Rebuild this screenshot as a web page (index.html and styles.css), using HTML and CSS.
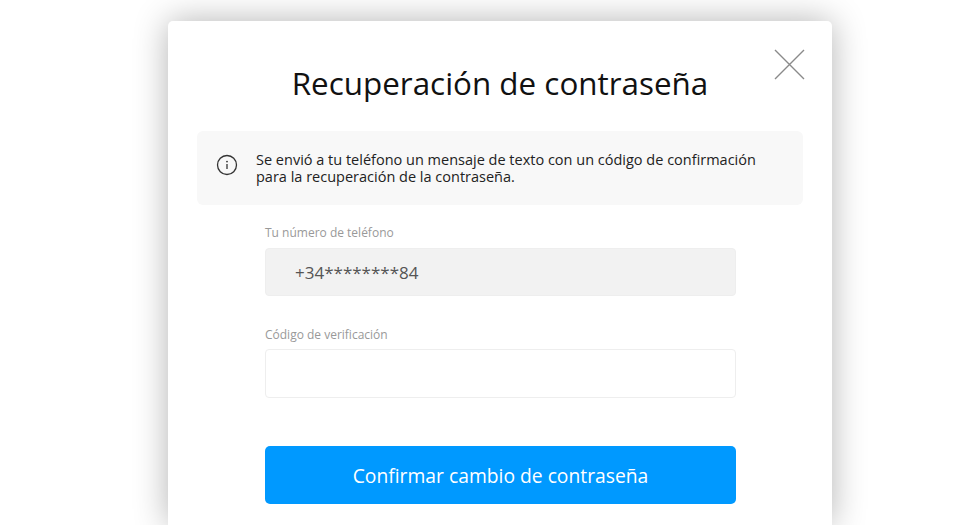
FILE: index.html
```html
<!DOCTYPE html>
<html lang="es">
<head>
    <meta charset="UTF-8">
    <meta name="viewport" content="width=device-width, initial-scale=1.0">
    <title>Recuperación de contraseña</title>

    <link rel="stylesheet" href="styles.css">
</head>
<body>
    <div class="backdrop">
        <div class="card">
            <button class="close" type="button" aria-label="Cerrar">
                <svg width="32" height="32" viewBox="0 0 32 32">
                    <path d="M2 2 L31 31 M31 2 L2 31" stroke="#8a8a8a" stroke-width="1.4" fill="none"/>
                </svg>
            </button>

            <h2>Recuperación de contraseña</h2>

            <div class="notice">
                <svg class="notice-icon" width="22" height="22" viewBox="0 0 22 22">
                    <circle cx="11" cy="11" r="9.5" stroke="#333" stroke-width="1.3" fill="none"/>
                    <circle cx="11" cy="7.6" r="0.9" fill="#333"/>
                    <path d="M11 10 V15" stroke="#333" stroke-width="1.3" fill="none"/>
                </svg>
                <p>Se envió a tu teléfono un mensaje de texto con un código de confirmación<br>para la recuperación de la contraseña.</p>
            </div>

            <form class="form">
                <label for="phone">Tu número de teléfono</label>
                <input class="input input-disabled" type="text" id="phone" value="+34********84" disabled>

                <label class="label-code" for="code">Código de verificación</label>
                <input class="input input-code" type="text" id="code">

                <input class="submit" type="submit" value="Confirmar cambio de contraseña">
            </form>
        </div>
    </div>
</body>
</html>
```

FILE: styles.css
```css
/* General styling */
body, html {
    margin: 0;
    padding: 0;
    width: 100%;
    height: 100%;
    overflow: hidden;
    background-color: #fff;
    font-family: "Open Sans", sans-serif;
}

.backdrop {
    display: flex;
    box-sizing: border-box;
    height: 100%;
    padding: 21px 0 0 168px;
}

/* Card styling */
.card {
    position: relative;
    flex: none;
    box-sizing: border-box;
    width: 664px;
    height: 504px;
    padding: 42px 29px 0;
    background-color: #fff;
    border-radius: 5px 5px 0 0;
    box-shadow: 0 0 34px rgba(0, 0, 0, 0.3);
}

.close {
    position: absolute;
    top: 27px;
    right: 27px;
    width: 32px;
    height: 32px;
    padding: 0;
    border: none;
    background: none;
}

.close svg {
    display: block;
}

h2 {
    margin: 0 0 28px;
    font-size: 31.4px;
    line-height: 40px;
    font-weight: 400;
    text-align: center;
    color: #111;
}

/* Notice styling */
.notice {
    display: flex;
    align-items: center;
    gap: 18px;
    box-sizing: border-box;
    height: 74px;
    padding: 0 19px;
    background-color: #f8f8f8;
    border-radius: 6px;
}

.notice-icon {
    flex: none;
    margin-top: -6px;
}

.notice p {
    margin: 0;
    font-size: 14.5px;
    line-height: 17px;
    color: #222;
}

/* Form styling */
.form {
    display: flex;
    flex-direction: column;
    padding: 0 67px 0 68px;
}

.form label {
    margin-bottom: 7px;
    font-size: 12px;
    line-height: 17px;
    color: #999;
}

.form label:first-child {
    margin-top: 19px;
}

.form .label-code {
    margin-bottom: 6px;
}

.input {
    box-sizing: border-box;
    height: 48px;
    margin-bottom: 30px;
    padding: 0 29px;
    border: 1px solid #eee;
    border-radius: 4px;
    background-color: #fff;
    font-family: inherit;
    font-size: 17px;
    color: #555;
}

.input-disabled {
    background-color: #f2f2f2;
    -webkit-text-fill-color: #555;
    opacity: 1;
}

.input-code {
    height: 49px;
    margin-bottom: 29px;
}

.submit {
    height: 58px;
    margin-top: 19px;
    border: none;
    border-radius: 5px;
    background-color: #0099ff;
    font-family: inherit;
    font-size: 19.3px;
    color: #fff;
    cursor: pointer;
}
```
